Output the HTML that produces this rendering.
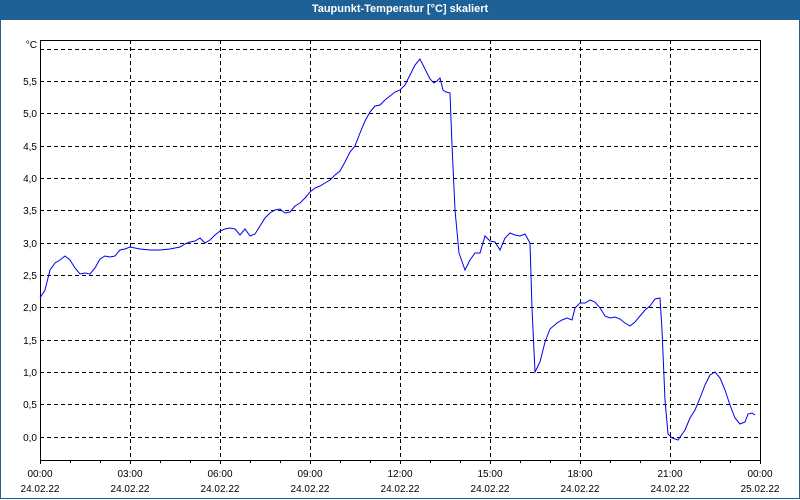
<!DOCTYPE html>
<html><head><style>
html,body{margin:0;padding:0;width:800px;height:500px;overflow:hidden;background:#fff;font-family:"Liberation Sans",sans-serif;}
#t{position:absolute;left:0;top:0;width:800px;height:20px;background:#1e6196;color:#fff;font-size:11px;font-weight:bold;text-align:center;line-height:19px;}
#f{position:absolute;left:0;top:20px;width:798px;height:478px;border:1px solid #1e6196;border-top:none;}
</style></head><body>
<div id="t">Taupunkt-Temperatur [°C] skaliert</div>
<div id="f"></div>
<svg width="800" height="500" style="position:absolute;left:0;top:0" font-family="Liberation Sans, sans-serif" font-size="10">
<g stroke="#000" stroke-width="1" stroke-dasharray="4,3" shape-rendering="crispEdges">
<path d="M40 49.5H760M40 81.5H760M40 113.5H760M40 146.5H760M40 178.5H760M40 210.5H760M40 243.5H760M40 275.5H760M40 307.5H760M40 340.5H760M40 372.5H760M40 404.5H760M40 437.5H760"/>
<path d="M130.5 40V460M220.5 40V460M310.5 40V460M400.5 40V460M490.5 40V460M580.5 40V460M670.5 40V460"/>
</g>
<g stroke="#000" stroke-width="1" fill="none" shape-rendering="crispEdges">
<path d="M40.5 40V460.5H760.5V40M40 40.5H760"/>
<path d="M40.5 460v4M70.5 460v3M100.5 460v3M130.5 460v4M160.5 460v3M190.5 460v3M220.5 460v4M250.5 460v3M280.5 460v3M310.5 460v4M340.5 460v3M370.5 460v3M400.5 460v4M430.5 460v3M460.5 460v3M490.5 460v4M520.5 460v3M550.5 460v3M580.5 460v4M610.5 460v3M640.5 460v3M670.5 460v4M700.5 460v3M730.5 460v3M760.5 460v4"/>
</g>
<g fill="#000" text-anchor="end">
<text x="37" y="48">°C</text>
<text x="37" y="85">5,5</text><text x="37" y="117">5,0</text><text x="37" y="150">4,5</text><text x="37" y="182">4,0</text><text x="37" y="214">3,5</text><text x="37" y="247">3,0</text><text x="37" y="279">2,5</text><text x="37" y="311">2,0</text><text x="37" y="344">1,5</text><text x="37" y="376">1,0</text><text x="37" y="408">0,5</text><text x="37" y="441">0,0</text>
</g>
<g fill="#000" text-anchor="middle">
<text x="40" y="477">00:00</text><text x="130" y="477">03:00</text><text x="220" y="477">06:00</text><text x="310" y="477">09:00</text><text x="400" y="477">12:00</text><text x="490" y="477">15:00</text><text x="580" y="477">18:00</text><text x="670" y="477">21:00</text><text x="760" y="477">00:00</text>
<text x="40" y="492">24.02.22</text><text x="130" y="492">24.02.22</text><text x="220" y="492">24.02.22</text><text x="310" y="492">24.02.22</text><text x="400" y="492">24.02.22</text><text x="490" y="492">24.02.22</text><text x="580" y="492">24.02.22</text><text x="670" y="492">24.02.22</text><text x="760" y="492">25.02.22</text>
</g>
<polyline fill="none" stroke="#0000ee" stroke-width="1" points="40,298 45,290 50,270 55,263 60,260 65,256 70,260 75,268 80,274 85,273 90,274 95,268 100,259 105,256 110,257 115,256 120,250 125,249 130,247 135,248 140,249 150,250 160,250 170,249 180,247 185,244 190,242 195,241 200,238 205,243 210,240 215,235 220,231 225,229 230,228 235,229 240,235 245,229 250,236 255,234 260,226 265,218 270,213 275,210 280,209 285,213 290,212 295,206 300,203 305,198 310,192 315,188 320,186 325,183 330,180 335,175 340,171 345,162 350,152 355,146 360,133 365,121 370,112 375,106 380,105 385,100 390,96 395,92 400,90 405,85 410,75 415,65 420,59 430,79 434,83 437,81 440,78 443,90 446,92 450,93 452,145 455,210 459,253 465,270 470,260 475,253 480,253 485,236 490,241 495,242 500,250 505,238 510,233 515,235 520,236 525,234 530,243 532,308 535,372 540,362 545,342 550,329 557,323 562,320 567,318 572,320 575,308 580,303 585,303 590,300 595,302 600,308 605,316 610,318 615,317 620,319 625,323 630,326 635,322 640,316 645,310 650,306 655,299 660,298 662,330 665,400 668,434 672,438 678,440 685,430 690,418 695,410 700,398 705,385 710,375 715,372 720,378 725,390 730,405 735,418 740,424 745,422 748,414 752,413 755,415"/>
</svg>
</body></html>
